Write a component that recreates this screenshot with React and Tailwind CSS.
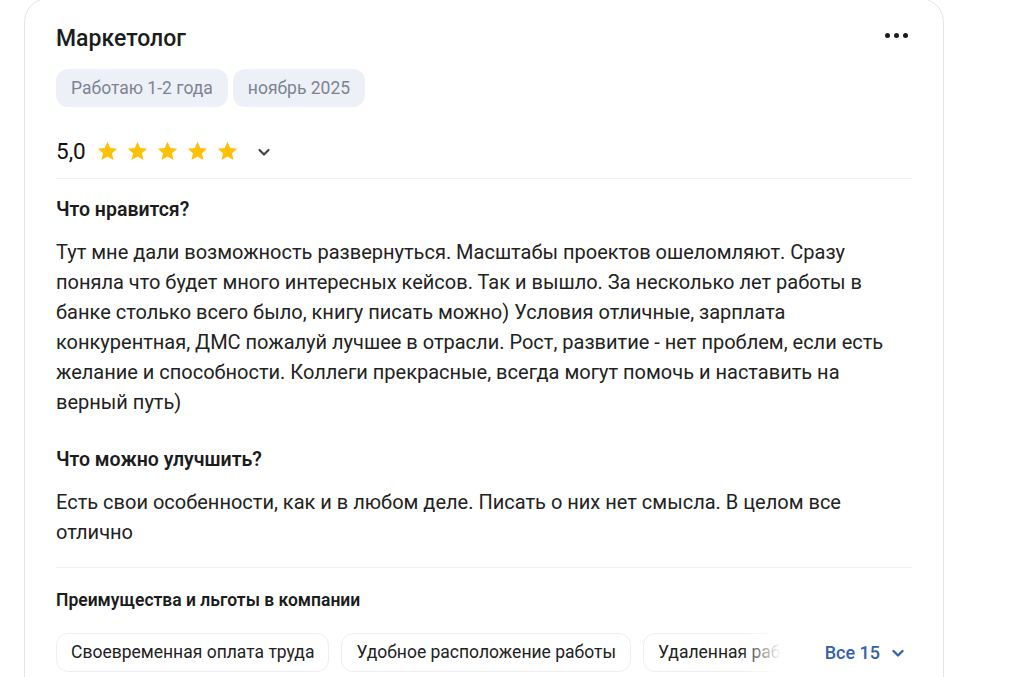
import React from "react";

function Star() {
  return (
    <svg width="23" height="22" viewBox="0 0 24 24" className="shrink-0">
      <path
        d="M12 1.8l3.05 6.9 7.5.72-5.66 5 1.66 7.38L12 17.95 5.45 21.8l1.66-7.38-5.66-5 7.5-.72z"
        fill="#FFC107"
      />
    </svg>
  );
}

function Chevron({ color = "#444", size = 16, sw = 2.2 }) {
  return (
    <svg width={size} height={size} viewBox="0 0 16 16" fill="none">
      <path d="M3.5 6l4.5 4.5L12.5 6" stroke={color} strokeWidth={sw} strokeLinecap="round" strokeLinejoin="round" />
    </svg>
  );
}

export default function App() {
  const font = { fontFamily: "Roboto, 'Noto Sans', sans-serif" };
  return (
    <div className="w-[1011px] h-[677px] overflow-hidden bg-white" style={font}>
      <div className="ml-[24px] -mt-[2px] w-[920px] rounded-[24px] border border-[#e2e5eb] bg-white px-[31px] pt-[26px] pb-8">
        <div className="flex items-start justify-between">
          <h1 className="text-[23px] leading-[28px] font-medium text-[#1c1c1c]">Маркетолог</h1>
          <div className="flex items-center gap-[4px] mr-[4px] mt-[8px]">
            <span className="w-[5px] h-[5px] rounded-full bg-[#1c1c1c]" />
            <span className="w-[5px] h-[5px] rounded-full bg-[#1c1c1c]" />
            <span className="w-[5px] h-[5px] rounded-full bg-[#1c1c1c]" />
          </div>
        </div>
        <div className="mt-[16px] flex gap-[5px]">
          <span className="h-[38px] flex items-center px-[15px] rounded-[12px] bg-[#edf0f6] text-[17.5px] text-[#7c8492]">Работаю 1-2 года</span>
          <span className="h-[38px] flex items-center px-[15px] rounded-[12px] bg-[#edf0f6] text-[17.5px] text-[#7c8492]">ноябрь 2025</span>
        </div>
        <div className="mt-[29px] h-[30px] flex items-center">
          <span className="text-[22.5px] text-[#111] mr-[10px] leading-none">5,0</span>
          <div className="flex items-center gap-[7px]">
            <Star /><Star /><Star /><Star /><Star />
          </div>
          <span className="ml-[17px] mt-[1px]"><Chevron /></span>
        </div>
        <div className="mt-[12px] h-px bg-[#eff0f3]" />
        <h2 className="mt-[19px] text-[19.5px] leading-[24px] font-semibold text-[#1c1c1c]">Что нравится?</h2>
        <p className="mt-[15px] text-[20px] leading-[30px] text-[#222]">
          Тут мне дали возможность развернуться. Масштабы проектов ошеломляют. Сразу поняла что будет много интересных кейсов. Так и вышло. За несколько лет работы в банке столько всего было, книгу писать можно) Условия отличные, зарплата конкурентная, ДМС пожалуй лучшее в отрасли. Рост, развитие - нет проблем, если есть желание и способности. Коллеги прекрасные, всегда могут помочь и наставить на верный путь)
        </p>
        <h2 className="mt-[31px] text-[19.5px] leading-[24px] font-semibold text-[#1c1c1c]">Что можно улучшить?</h2>
        <p className="mt-[15px] text-[20px] leading-[30px] text-[#222]">
          Есть свои особенности, как и в любом деле. Писать о них нет смысла. В целом все отлично
        </p>
        <div className="mt-[20px] h-px bg-[#eff0f3]" />
        <h3 className="mt-[22px] text-[17.5px] leading-[20px] font-semibold text-[#1c1c1c]">Преимущества и льготы в компании</h3>
        <div className="mt-[23px] flex items-center">
          <div className="relative w-[725px] overflow-hidden">
            <div className="flex gap-[12px] whitespace-nowrap">
              <span className="h-[39px] flex items-center px-[14px] rounded-[12px] border border-[#eceef3] text-[17.5px] text-[#222]">Своевременная оплата труда</span>
              <span className="h-[39px] flex items-center px-[14px] rounded-[12px] border border-[#eceef3] text-[17.5px] text-[#222]">Удобное расположение работы</span>
              <span className="h-[39px] flex items-center px-[14px] rounded-[12px] border border-[#eceef3] text-[17.5px] text-[#222]">Удаленная работа</span>
            </div>
            <div className="absolute right-0 top-0 h-full w-[40px] bg-gradient-to-r from-transparent to-white" />
          </div>
          <button className="ml-auto mr-[6px] flex items-center gap-[10px] text-[18px] font-medium text-[#3562a8]">
            Все 15
            <Chevron color="#3562a8" size={16} sw={2.4} />
          </button>
        </div>
      </div>
    </div>
  );
}
